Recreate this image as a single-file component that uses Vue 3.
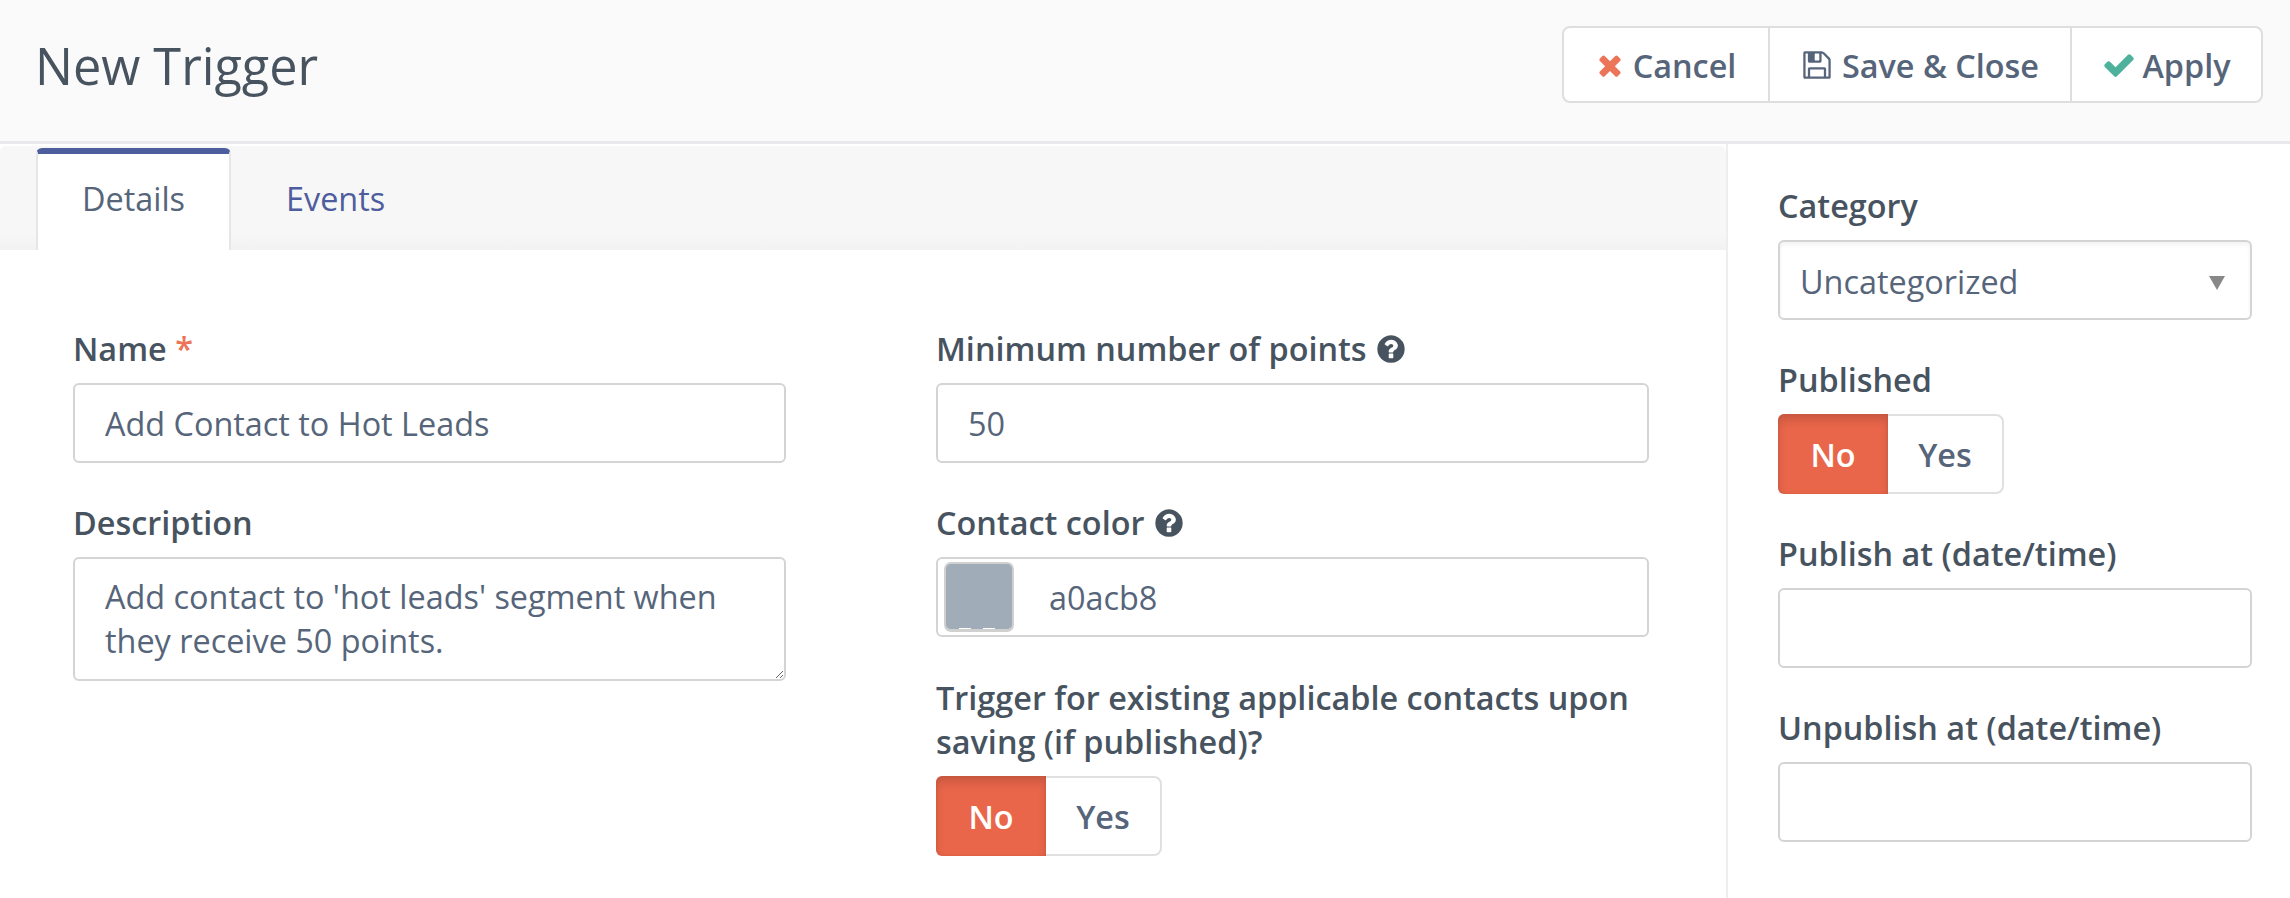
<script setup>
const icons = {
  times: 'M1490 1322q0 40-28 68l-136 136q-28 28-68 28t-68-28l-294-294-294 294q-28 28-68 28t-68-28l-136-136q-28-28-28-68t28-68l294-294-294-294q-28-28-28-68t28-68l136-136q28-28 68-28t68 28l294 294 294-294q28-28 68-28t68 28l136 136q28 28 28 68t-28 68l-294 294 294 294q28 28 28 68z',
  check: 'M1671 566q0 40-28 68l-724 724-136 136q-28 28-68 28t-68-28l-136-136-362-362q-28-28-28-68t28-68l136-136q28-28 68-28t68 28l294 295 656-657q28-28 68-28t68 28l136 136q28 28 28 68z',
  save: 'M512 1536h768v-384h-768v384zm896 0h128v-896q0-14-10-38.500t-20-34.500l-281-281q-10-10-34-20t-39-10v416q0 40-28 68t-68 28h-576q-40 0-68-28t-28-68v-416h-128v1280h128v-416q0-40 28-68t68-28h832q40 0 68 28t28 68v416zm-384-928v-320q0-13-9.500-22.500t-22.500-9.500h-192q-13 0-22.500 9.500t-9.500 22.500v320q0 13 9.500 22.500t22.500 9.500h192q13 0 22.500-9.500t9.500-22.500zm640 32v928q0 40-28 68t-68 28h-1344q-40 0-68-28t-28-68v-1344q0-40 28-68t68-28h928q40 0 88 20t76 48l280 280q28 28 48 76t20 88z',
  help: 'M1024 1376v-192q0-14-9-23t-23-9h-192q-14 0-23 9t-9 23v192q0 14 9 23t23 9h192q14 0 23-9t9-23zm256-672q0-88-55.500-163t-138.500-116-170-41q-243 0-371 213-15 24 8 42l132 100q7 6 19 6 16 0 25-12 53-68 86-92 34-24 86-24 48 0 85.500 26t37.500 59q0 38-20 61t-68 45q-63 28-115.500 86.500t-52.500 125.500v36q0 14 9 23t23 9h192q14 0 23-9t9-23q0-19 21.500-49.500t54.500-49.500q32-18 49-28.500t46-35 44.500-48 28-60.500 12.500-81zm384 192q0 209-103 385.500t-279.500 279.500-385.500 103-385.500-103-279.500-279.500-103-385.500 103-385.500 279.500-279.500 385.500-103 385.500 103 279.500 279.500 103 385.500z'
}
</script>

<template>
  <div class="page">
    <header class="top">
      <h1 class="title">New Trigger</h1>
      <div class="actions">
        <button class="act act-cancel">
          <svg class="ic ic-times" viewBox="0 0 1792 1792"><path :d="icons.times" /></svg>Cancel
        </button>
        <button class="act act-save">
          <svg class="ic ic-save" viewBox="0 0 1792 1792"><path :d="icons.save" /></svg>Save &amp; Close
        </button>
        <button class="act act-apply">
          <svg class="ic ic-check" viewBox="0 0 1792 1792"><path :d="icons.check" /></svg>Apply
        </button>
      </div>
    </header>

    <div class="body">
      <main class="main">
        <nav class="tabs">
          <a class="tab tab-active">Details</a>
          <a class="tab tab-link">Events</a>
        </nav>
        <div class="form">
          <div class="col">
            <div class="field">
              <label class="lbl">Name <span class="req">*</span></label>
              <input class="inp" readonly value="Add Contact to Hot Leads" />
            </div>
            <div class="field">
              <label class="lbl">Description</label>
              <textarea class="inp area" readonly>Add contact to 'hot leads' segment when they receive 50 points.</textarea>
            </div>
          </div>
          <div class="col">
            <div class="field">
              <label class="lbl">Minimum number of points
                <svg class="help" viewBox="0 0 1792 1792"><path :d="icons.help" /></svg>
              </label>
              <input class="inp" readonly value="50" />
            </div>
            <div class="field">
              <label class="lbl">Contact color
                <svg class="help" viewBox="0 0 1792 1792"><path :d="icons.help" /></svg>
              </label>
              <div class="inp color">
                <span class="swatch"></span>
                <span>a0acb8</span>
              </div>
            </div>
            <div class="field field-last">
              <label class="lbl lbl-wrap">Trigger for existing applicable contacts upon saving (if published)?</label>
              <div class="toggle">
                <span class="tg tg-no">No</span>
                <span class="tg tg-yes">Yes</span>
              </div>
            </div>
          </div>
        </div>
      </main>

      <aside class="side">
        <div class="sfield">
          <label class="lbl">Category</label>
          <div class="inp select">
            <span>Uncategorized</span>
            <span class="caret"></span>
          </div>
        </div>
        <div class="sfield">
          <label class="lbl">Published</label>
          <div class="toggle">
            <span class="tg tg-no">No</span>
            <span class="tg tg-yes">Yes</span>
          </div>
        </div>
        <div class="sfield">
          <label class="lbl">Publish at (date/time)</label>
          <input class="inp" readonly />
        </div>
        <div class="sfield">
          <label class="lbl">Unpublish at (date/time)</label>
          <input class="inp" readonly />
        </div>
      </aside>
    </div>
  </div>
</template>

<style>
html, body { margin: 0; background: #fff; }
</style>

<style scoped>
.page {
  width: 2290px;
  height: 898px;
  overflow: hidden;
  background: #fff;
  font-family: "Open Sans", "Liberation Sans", sans-serif;
  color: #47535f;
  box-sizing: border-box;
}
.top {
  height: 144px;
  box-sizing: border-box;
  background: #fafafa;
  border-bottom: 3px solid #e9e9ed;
  display: flex;
  align-items: flex-start;
  justify-content: space-between;
  padding: 26px 27px 0 35px;
}
.title {
  margin: 0;
  font-size: 50.4px;
  font-weight: 400;
  line-height: 64px;
  padding-top: 8px;
  color: #47535f;
}
.actions {
  display: flex;
  height: 77px;
  box-sizing: border-box;
  border: 2px solid #dedede;
  border-radius: 8px;
  background: #fff;
}
.act {
  border: 0;
  background: transparent;
  font: 600 32.4px "Open Sans", sans-serif;
  color: #56657a;
  display: flex;
  align-items: center;
  justify-content: center;
  padding: 0;
  box-sizing: border-box;
}
.act-cancel { width: 206px; border-right: 2px solid #dedede; }
.act-save { width: 302px; border-right: 2px solid #dedede; }
.act-apply { flex: 1; width: 189px; }
.ic { flex: none; }
.ic-times { width: 32px; height: 32px; fill: #ec7458; margin-right: 7px; margin-left: -2px; }
.ic-save { width: 32px; height: 32px; fill: #56657a; margin-right: 9px; }
.ic-check { width: 34px; height: 34px; fill: #4db19b; margin-right: 6px; }

.body { display: flex; height: 754px; }
.main {
  width: 1728px;
  box-sizing: border-box;
  border-right: 2px solid #eeeeee;
  flex: none;
}
.tabs {
  height: 104px;
  margin-top: 2px;
  box-sizing: border-box;
  background: linear-gradient(#f7f7f7 85%, #f2f2f2);
  border-radius: 6px 6px 0 0;
  display: flex;
  padding: 2px 0 0 36px;
  font-size: 32.4px;
}
.tab {
  display: flex;
  align-items: center;
  box-sizing: border-box;
}
.tab-active {
  width: 195px;
  justify-content: center;
  background: #fff;
  border: solid #e6e6e6;
  border-width: 0 2px;
  border-top: 6px solid #4e5d9d;
  border-radius: 6px 6px 0 0;
  color: #56657a;
  padding-bottom: 8px;
}
.tab-link {
  padding: 0 0 3px 55px;
  color: #4e5d9d;
}

.form {
  display: flex;
  gap: 150px;
  padding: 78px 0 0 73px;
}
.col { width: 713px; }
.field { margin-bottom: 39px; }
.lbl {
  display: block;
  font-size: 32.4px;
  font-weight: 600;
  line-height: 40px;
  color: #47535f;
  margin-bottom: 15px;
}
.lbl-wrap { line-height: 44px; margin-top: -1px; margin-bottom: 13px; white-space: normal; }
.req { color: #ec7458; }
.help {
  width: 32px;
  height: 32px;
  fill: #47535f;
  vertical-align: -4px;
}
.inp {
  display: block;
  width: 100%;
  height: 80px;
  box-sizing: border-box;
  border: 2px solid #d4d4d4;
  border-radius: 6px;
  background: #fff;
  font: 400 32.4px/44px "Open Sans", sans-serif;
  color: #56657a;
  padding: 0 30px;
  outline: none;
  margin: 0;
}
.area {
  height: 124px;
  padding: 15px 30px;
  resize: both;
}
.color {
  display: flex;
  align-items: center;
  padding: 0 0 0 6px;
  gap: 35px;
}
.swatch {
  width: 70px;
  height: 70px;
  box-sizing: border-box;
  border: 2px solid #d0d0d0;
  border-bottom-width: 3px;
  border-radius: 7px;
  background:
    linear-gradient(#fff, #fff) 13px 100% / 12px 1px no-repeat,
    linear-gradient(#fff, #fff) 37px 100% / 12px 1px no-repeat,
    #a0acb8;
}
.toggle {
  display: flex;
  width: 226px;
  height: 80px;
  box-sizing: border-box;
  border: 2px solid #e0e0e0;
  border-radius: 8px;
  font-size: 32.4px;
  font-weight: 600;
}
.tg {
  display: flex;
  align-items: center;
  justify-content: center;
}
.tg-no {
  width: 110px;
  margin: -2px 0 -2px -2px;
  background: #e9664a;
  color: #fff;
  border-radius: 6px 0 0 6px;
  box-shadow: inset 0 7px 8px rgba(0, 0, 0, 0.12), inset 0 0 4px rgba(0, 0, 0, 0.08);
}
.tg-yes { flex: 1; color: #56657a; }

.side {
  flex: 1;
  box-sizing: border-box;
  padding: 41px 38px 0 50px;
}
.sfield { margin-bottom: 39px; }
.select {
  display: flex;
  align-items: center;
  justify-content: space-between;
  padding: 2px 25px 0 20px;
  box-shadow: inset 0 3px 4px rgba(0, 0, 0, 0.05);
}
.caret {
  width: 0;
  height: 0;
  margin-top: 4px;
  border-left: 8px solid transparent;
  border-right: 8px solid transparent;
  border-top: 14px solid #888;
}
</style>
